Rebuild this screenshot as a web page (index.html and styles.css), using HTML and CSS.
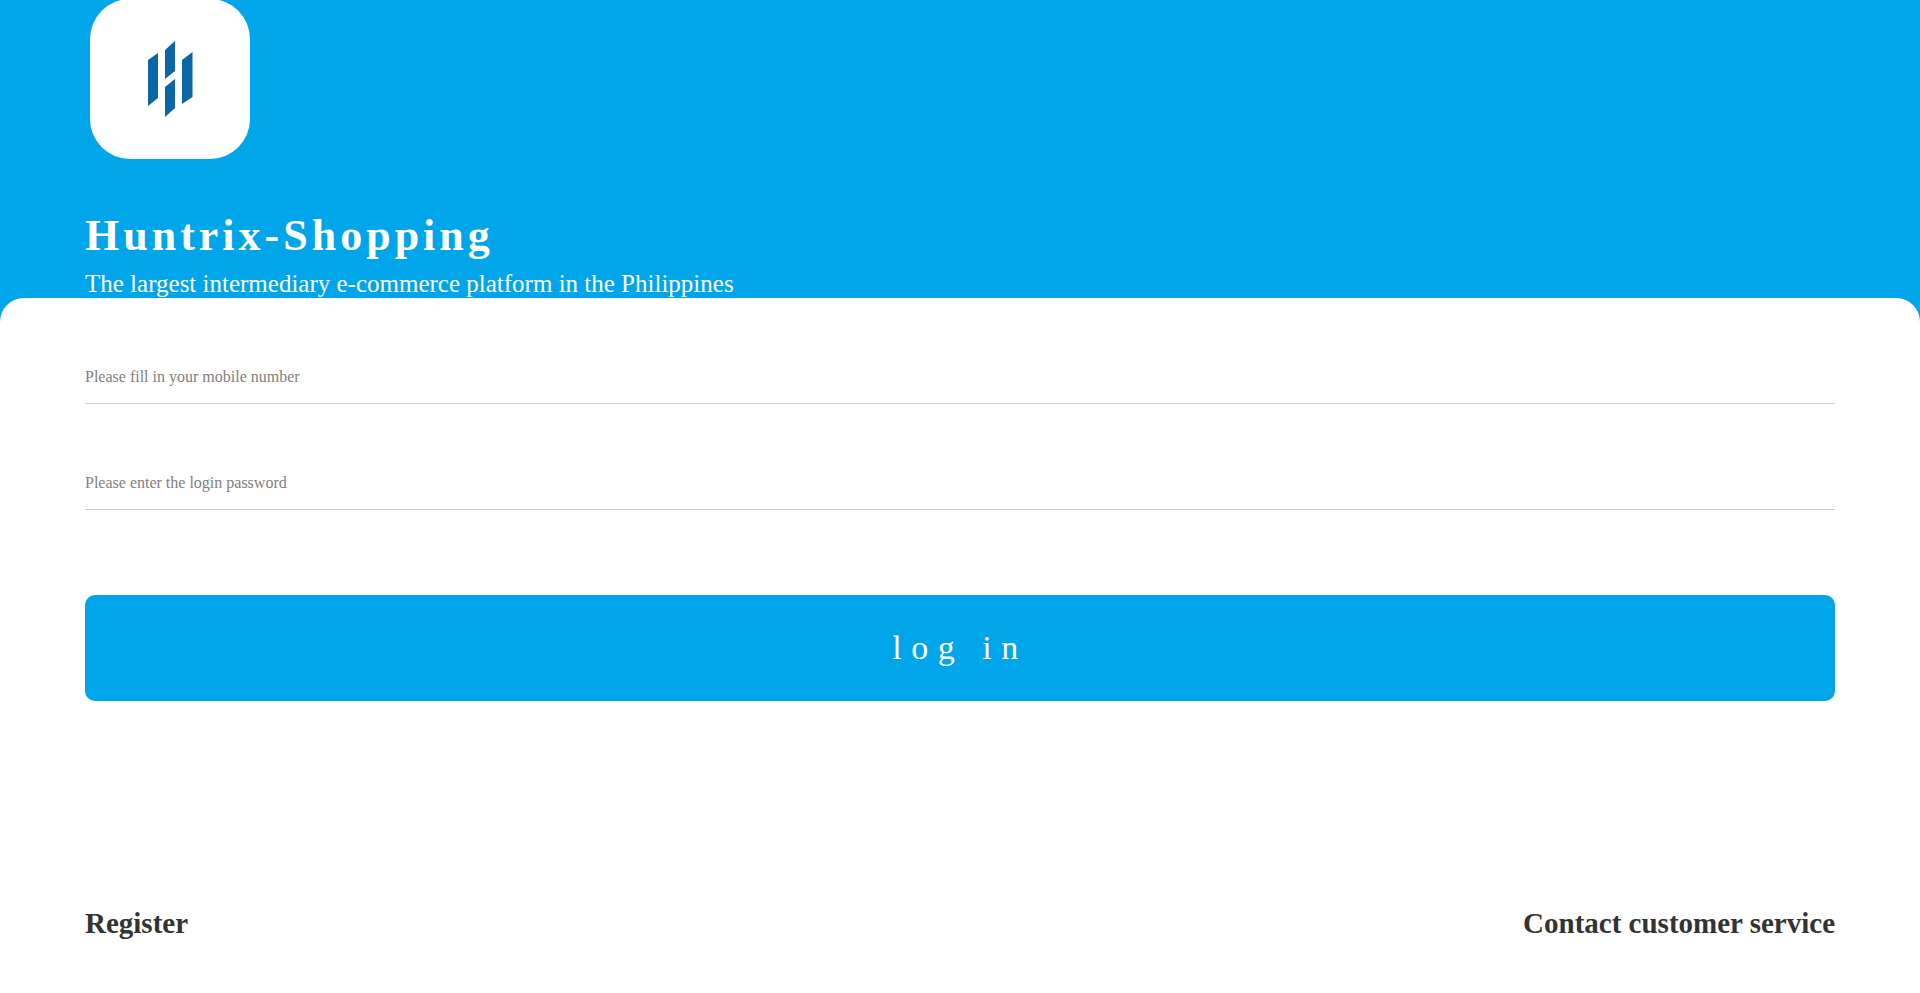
FILE: index.html
```html
<!DOCTYPE html>
<html lang="en">
<head>
    <meta charset="UTF-8">
    <meta name="viewport" content="width=device-width, initial-scale=1.0">
    <title>Huntrix-Shopping</title>
    <link rel="stylesheet" href="styles.css">
</head>
<body>
    <div class="header">
        <div class="logo-box">
            <svg class="logo" width="160" height="160" viewBox="0 -1 160 160">
                <path d="M58 60 L68 53 L68 98 L58 106 Z"/>
                <path d="M75 50 L85 41 L85 71 L75 79 Z"/>
                <path d="M75 87 L85 79 L85 108 L75 117 Z"/>
                <path d="M92 60 L102.500 52 L102.500 97 L92 104 Z"/>
            </svg>
        </div>
        <h1 class="title">Huntrix-Shopping</h1>
        <p class="subtitle">The largest intermediary e-commerce platform in the Philippines</p>
    </div>

    <div class="panel">
        <div class="form-group">
            <input type="text" placeholder="Please fill in your mobile number">
        </div>
        <div class="form-group">
            <input type="password" placeholder="Please enter the login password">
        </div>
        <button class="login-btn">log in</button>
        <div class="links">
            <a class="link">Register</a>
            <a class="link">Contact customer service</a>
        </div>
    </div>
</body>
</html>
```

FILE: styles.css
```css
html, body {
    height: 100%;
}
body {
    margin: 0;
    font-family: "Liberation Serif", serif;
    background-color: #00a6e9;
    overflow: hidden;
    display: flex;
    flex-direction: column;
}
.header {
    height: 298px;
    flex-shrink: 0;
    padding-left: 85px;
    color: white;
    overflow: hidden;
}
.logo-box {
    width: 160px;
    height: 160px;
    margin-top: -1px;
    margin-left: 5px;
    background-color: white;
    border-radius: 40px;
}
.logo {
    display: block;
}
.logo path {
    fill: #0b66a8;
}
.title {
    margin: 51px 0 0;
    font-size: 44px;
    line-height: 52px;
    letter-spacing: 4px;
    font-weight: bold;
}
.subtitle {
    margin: 5px 0 0;
    font-size: 25px;
    line-height: 34px;
    white-space: nowrap;
}
.panel {
    flex: 1;
    background-color: white;
    border-radius: 24px 24px 0 0;
    padding: 46px 85px 0;
    display: flex;
    flex-direction: column;
}
.form-group {
    height: 59px;
    margin-bottom: 46px;
    border-bottom: 1px solid #cccccc;
}
input {
    width: 100%;
    height: 59px;
    padding: 7px 0 0;
    box-sizing: border-box;
    border: none;
    outline: none;
    font-family: inherit;
    font-size: 16px;
}
input::placeholder {
    color: #808080;
}
.login-btn {
    margin-top: 39px;
    height: 106px;
    background-color: #00a6e9;
    color: white;
    border: none;
    border-radius: 10px;
    font-family: inherit;
    font-size: 34px;
    letter-spacing: 9.5px;
}
.links {
    display: flex;
    justify-content: space-between;
    margin-top: 202px;
}
.link {
    font-size: 29px;
    line-height: 40px;
    font-weight: bold;
    color: #333333;
}
```
